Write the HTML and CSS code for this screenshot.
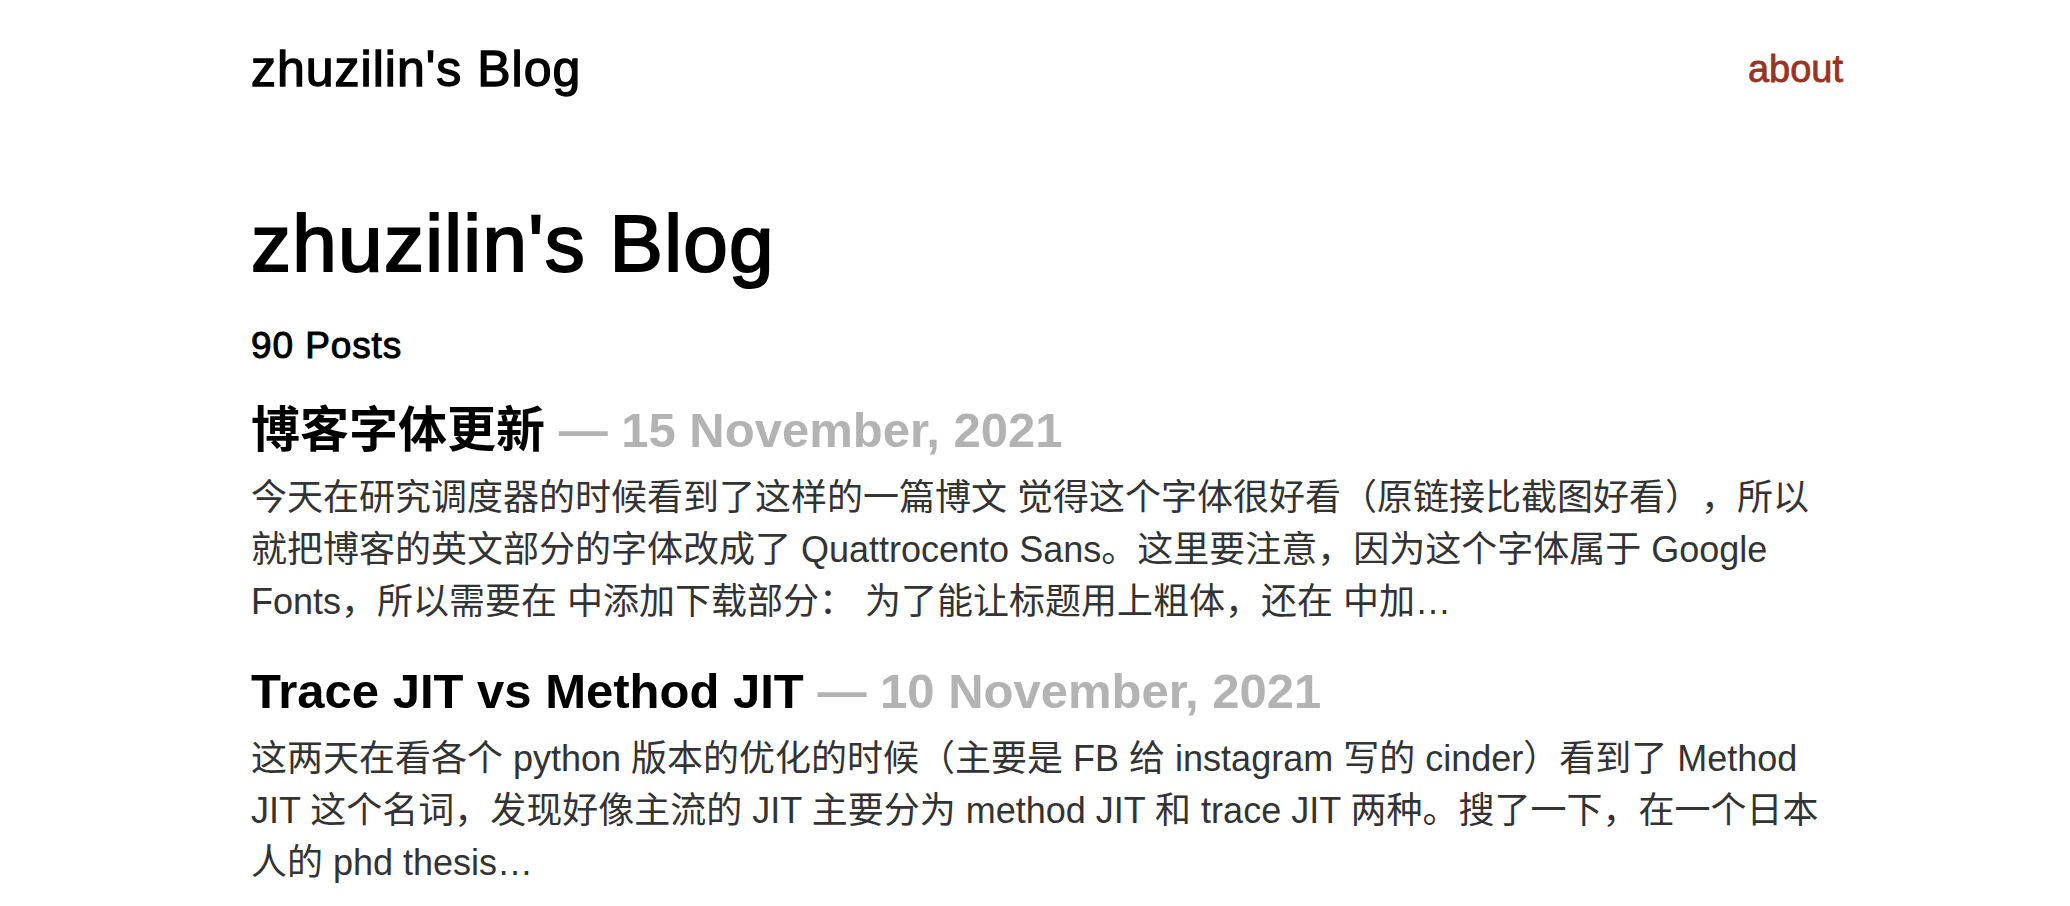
FILE: index.html
```html
<!DOCTYPE html>
<html lang="zh-CN">
<head>
<meta charset="utf-8">
<title>zhuzilin's Blog</title>
<link rel="stylesheet" href="styles.css">
</head>
<body>
<div class="page">
  <header class="site-header">
    <a class="site-title" href="#">zhuzilin's Blog</a>
    <nav class="site-nav"><a href="#">about</a></nav>
  </header>
  <main class="home">
    <h1 class="home-title">zhuzilin's Blog</h1>
    <p class="post-count">90 Posts</p>
    <ul class="post-list">
      <li class="post">
        <h2 class="post-title"><a href="#">博客字体更新</a> <span class="post-date">— 15 November, 2021</span></h2>
        <p class="excerpt">今天在研究调度器的时候看到了这样的一篇博文 觉得这个字体很好看（原链接比截图好看），所以就把博客的英文部分的字体改成了 Quattrocento Sans。这里要注意，因为这个字体属于 Google Fonts，所以需要在 中添加下载部分： 为了能让标题用上粗体，还在 中加…</p>
      </li>
      <li class="post">
        <h2 class="post-title"><a href="#">Trace JIT vs Method JIT</a> <span class="post-date">— 10 November, 2021</span></h2>
        <p class="excerpt">这两天在看各个 python 版本的优化的时候（主要是 FB 给 instagram 写的 cinder）看到了 Method JIT 这个名词，发现好像主流的 JIT 主要分为 method JIT 和 trace JIT 两种。搜了一下，在一个日本人的 phd thesis…</p>
      </li>
    </ul>
  </main>
</div>
</body>
</html>
```
FILE: styles.css
```css
* {
  box-sizing: border-box;
}

body {
  margin: 0;
  background: #ffffff;
  color: #000000;
  font-family: "Liberation Sans", "Noto Sans CJK SC", sans-serif;
  text-spacing-trim: space-all;
}

.page {
  width: 1592px;
  margin-left: 251px;
}

.site-header {
  display: flex;
  justify-content: space-between;
  align-items: center;
  padding: 39px 0;
}

.site-title {
  font-size: 50px;
  line-height: 60px;
  letter-spacing: 1px;
  color: #000000;
  text-decoration: none;
  -webkit-text-stroke: 1.3px #000000;
}

.site-nav a {
  font-size: 38px;
  line-height: 44px;
  color: #993324;
  text-decoration: none;
  -webkit-text-stroke: 0.8px #993324;
}

.home-title {
  font-size: 80px;
  line-height: 96px;
  letter-spacing: 1.3px;
  font-weight: normal;
  margin: 58px 0 0;
  -webkit-text-stroke: 2px #000000;
}

.post-count {
  font-size: 37px;
  line-height: 44px;
  letter-spacing: 0.9px;
  margin: 32px 0 0;
  -webkit-text-stroke: 1px #000000;
}

.post-list {
  list-style: none;
  margin: 32px 0 0;
  padding: 0;
}

.post + .post {
  margin-top: 33px;
}

.post-title {
  font-size: 49px;
  line-height: 60px;
  font-weight: bold;
  margin: 0 0 12px;
}

.post-title a {
  color: #000000;
  text-decoration: none;
}

.post-date {
  color: #b3b3b3;
}

.excerpt {
  font-size: 36px;
  line-height: 52px;
  color: #333333;
  margin: 0;
}
```
